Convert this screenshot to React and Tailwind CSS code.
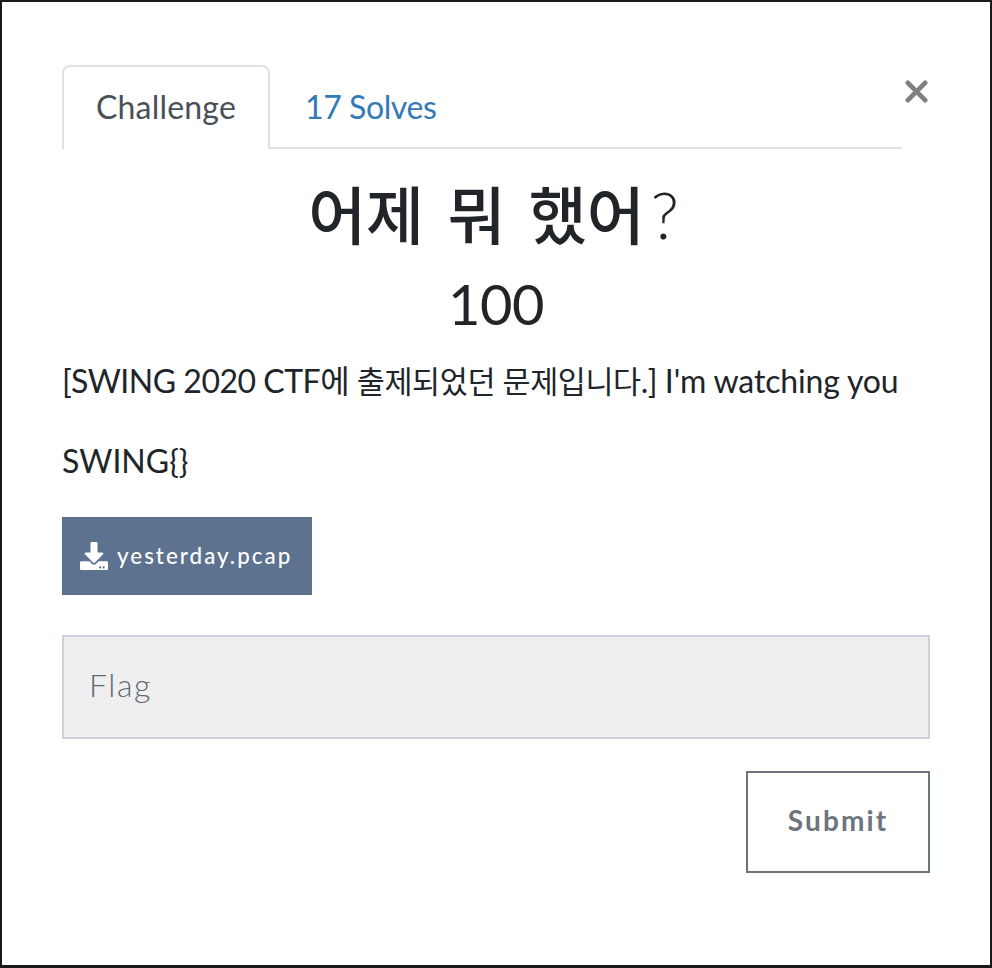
import React from 'react';
import { FaDownload } from 'react-icons/fa';

const cjk = "font-['Lato','Noto_Sans_CJK_KR',sans-serif]";

export default function App() {
  return (
    <div className={`${cjk} w-[992px] h-[968px] bg-white border-2 border-b-[3px] border-[#1a1a1a] pt-[63px] px-[60px] text-[#212529]`}>
      <div className="flex items-start">
        <div className="w-[840px] h-[84px] flex border-b-2 border-[#dee2e6]">
          <div className="w-[208px] h-[84px] pb-[3px] border-2 border-b-0 border-[#dee2e6] rounded-t-lg bg-white flex items-center justify-center text-[32px] tracking-[0.2px] text-[#495057]">
            Challenge
          </div>
          <div className="ml-[35px] h-[84px] flex items-center text-[32px] tracking-[-0.4px] text-[#337ab7]">17 Solves</div>
        </div>
        <button className="ml-auto mt-[4px] w-[28px] h-[44px] flex items-center justify-center text-[#808080]">
          <svg width="23" height="23" viewBox="0 0 24 24" fill="none" stroke="currentColor" strokeWidth="5" strokeLinecap="round">
            <path d="M3 3L21 21M21 3L3 21" />
          </svg>
        </button>
      </div>

      <h1 className="mt-[27px] text-center text-[63px] leading-[77px] font-medium [word-spacing:7.5px]">
        어제 뭐 했어<span className="font-light text-[65px] ml-[6px] mr-[5px]">?</span>
      </h1>
      <h2 className="mt-[17px] text-center text-[56px] leading-[67px] font-normal tracking-[-0.5px]">100</h2>
      <p className="mt-[20px] text-[32px] leading-[48px] whitespace-nowrap tracking-[-0.5px]">
        [SWING 2020 CTF에 <span className="text-[30.5px] tracking-[-0.4px]">출제되었던 문제입니다</span>.] <span className="tracking-[-0.15px]">I'm watching you</span>
      </p>
      <p className="mt-[32px] text-[32px] leading-[48px]">SWING{'{}'}</p>

      <div className="mt-[32px] w-[250px] h-[78px] bg-[#5c728f] text-white flex items-center pl-[18px] gap-[9px]">
        <FaDownload size={28} />
        <span className="text-[22.4px] font-medium tracking-[2px]">yesterday.pcap</span>
      </div>

      <div className="mt-[40px] w-[868px] h-[104px] pb-[4px] bg-[#efefef] border-2 border-[#cdd3dc] flex items-center px-[25px] text-[32px] font-light text-[#5f6972] tracking-[1.6px]">
        Flag
      </div>

      <div className="mt-[32px] w-[868px] flex justify-end">
        <button className="w-[184px] h-[102px] pb-[5px] border-2 border-[#6c757d] bg-white text-[#6c757d] text-[28px] font-bold tracking-[2.1px]">
          Submit
        </button>
      </div>
    </div>
  );
}
